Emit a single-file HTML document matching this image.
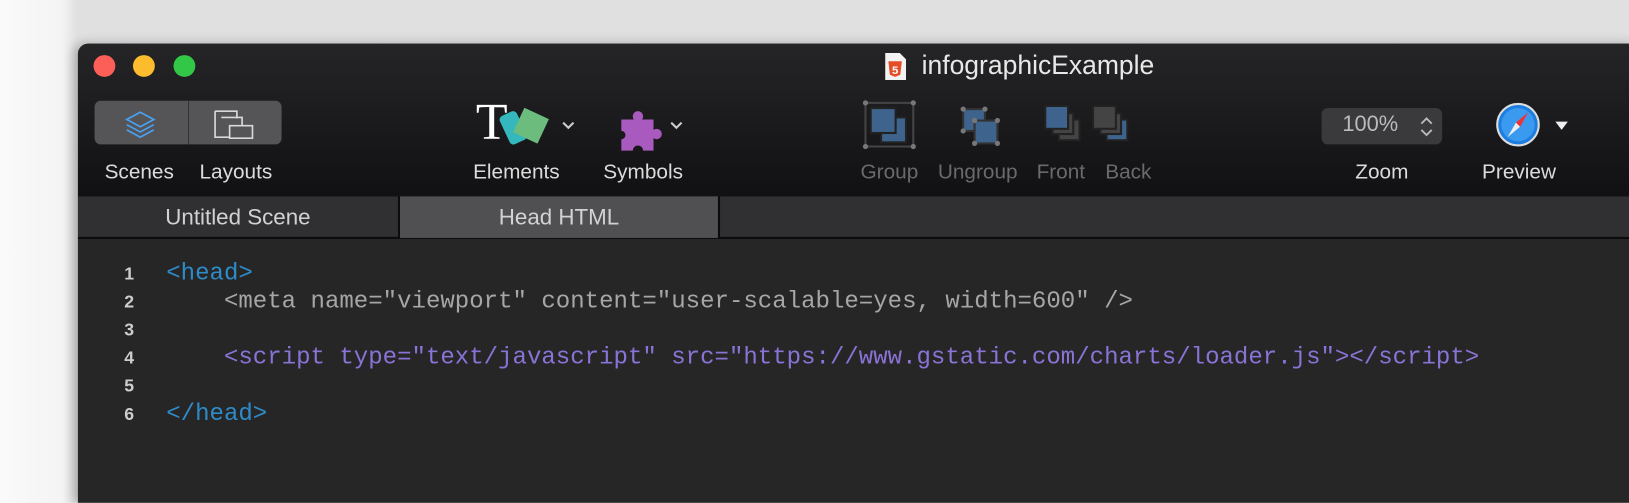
<!DOCTYPE html>
<html style="overflow:hidden;width:1629px;height:503px;background:#262626"><head><meta charset="utf-8"><style>
*{margin:0;padding:0;box-sizing:border-box}
body{width:1629px;height:503px;overflow:hidden;background:#f2f2f2;position:relative;font-family:"Liberation Sans",sans-serif}
.wrap{position:absolute;left:0;top:0;width:1568px;height:484px;overflow:hidden;transform:scale(1.039);transform-origin:0 0;background:linear-gradient(90deg,#fafafa,#f4f4f4 60px,#e0e0e0 74px)}
.win{position:absolute;left:75px;top:42px;width:1500px;height:442px;border-radius:10px 0 0 0;overflow:hidden;background:#262626;box-shadow:-4px 0 10px rgba(0,0,0,.25)}
.tb{position:absolute;left:0;top:0;width:100%;height:146px;background:linear-gradient(#252527,#111113)}
.dot{position:absolute;top:11px;width:21px;height:21px;border-radius:50%}
.title{position:absolute;left:812px;top:7px;color:#e8e8e8;font-size:25.5px}
.lbl{position:absolute;top:113px;font-size:20px;color:#dcdcdc;transform:translateX(-50%);white-space:nowrap}
.dim{color:#6a6a6a}
.tabs{position:absolute;top:146px;left:0;width:100%;height:42px;background:#303033;border-top:1px solid #0c0c0c;border-bottom:2px solid #0c0c0c}
.tab{position:absolute;top:0;height:40px;line-height:40px;text-align:center;color:#d2d2d2;font-size:21.5px}
.code{position:absolute;left:0;top:208px;font-family:"Liberation Mono",monospace;font-size:23.15px;line-height:27px;white-space:pre}
.ln{position:absolute;left:0;width:54px;text-align:right;color:#cdcdcd;font-family:"Liberation Sans",sans-serif;font-size:17px;font-weight:bold}
.c{position:absolute;left:85px}
.b{color:#2e8bc9}.g{color:#a6a6a6}.p{color:#8a73d6}
</style></head><body>
<div class="wrap">
<div class="win">
<div class="tb">
<div class="dot" style="left:15px;background:#fc5f57"></div>
<div class="dot" style="left:53px;background:#fdbc2e"></div>
<div class="dot" style="left:92px;background:#33c748"></div>
<svg style="position:absolute;left:776px;top:8px" width="22" height="28"><path d="M1 1h14l6 6v20H1z" fill="#f2f2f2"/><path d="M4 9h13l-1.5 13-5 2-5-2z" fill="#e44d26"/><text x="7.5" y="21" font-size="11" fill="#fff" font-family="Liberation Sans" font-weight="bold">5</text></svg>
<div class="title">infographicExample</div>
<div style="position:absolute;left:16px;top:55px;width:180px;height:42px;border-radius:6px;background:#555558"></div>
<div style="position:absolute;left:106px;top:55px;width:1px;height:42px;background:#333"></div>
<svg style="position:absolute;left:40px;top:62px" width="40" height="30" fill="none" stroke="#4aa0f0" stroke-width="1.6"><path d="M20 4l13 7-13 7-13-7z"/><path d="M7 16l13 7 13-7"/><path d="M7 21l13 7 13-7"/></svg>
<svg style="position:absolute;left:130px;top:63px" width="42" height="30" fill="none" stroke="#d8d8d8" stroke-width="1.6"><path d="M2 2h21v7M2 2v25h14"/><path d="M8 8h20v8"/><path d="M16 16h22v12H16z"/></svg>
<div class="lbl" style="left:59px">Scenes</div>
<div class="lbl" style="left:152px">Layouts</div>
<div style="position:absolute;left:383px;top:50px;font-family:'Liberation Serif',serif;font-size:50px;color:#fff;line-height:50px">T</div>
<svg style="position:absolute;left:400px;top:60px" width="70" height="45"><rect x="10" y="6" width="18" height="30" rx="4" fill="#34b7bd" transform="rotate(-25 19 21)"/><rect x="23" y="6" width="26" height="26" fill="#6cbc7d" transform="rotate(25 36 19)"/></svg>
<svg style="position:absolute;left:465px;top:74px" width="14" height="10" fill="none" stroke="#ccc" stroke-width="2"><path d="M2 2l5 5 5-5"/></svg>
<svg style="position:absolute;left:521px;top:61px" width="44" height="46"><path d="M2 12h12a5 5 0 1 1 8 0h11v10a5 5 0 1 1 0 8v12h-10a5 5 0 1 0-10 0H2V31a4 4 0 1 0 0-8z" fill="#a85abf"/></svg>
<svg style="position:absolute;left:569px;top:74px" width="14" height="10" fill="none" stroke="#ccc" stroke-width="2"><path d="M2 2l5 5 5-5"/></svg>
<div class="lbl" style="left:422px">Elements</div>
<div class="lbl" style="left:544px">Symbols</div>
<svg style="position:absolute;left:755px;top:53px" width="300" height="50">
<rect x="3" y="4" width="46" height="42" fill="none" stroke="#444" stroke-width="2"/>
<g fill="#777"><circle cx="3" cy="4" r="2.5"/><circle cx="49" cy="4" r="2.5"/><circle cx="3" cy="46" r="2.5"/><circle cx="49" cy="46" r="2.5"/></g>
<rect x="18" y="18" width="24" height="24" fill="#3e638c" stroke="#222" stroke-width="2"/><rect x="8" y="9" width="24" height="24" fill="#3e638c" stroke="#222" stroke-width="2"/>
<path d="M97 10h21v21H97z" fill="#3e638c" stroke="#333" stroke-width="2"/><path d="M108 21h22v22h-22z" fill="#3e638c" stroke="#333" stroke-width="2"/>
<g fill="#777"><circle cx="97" cy="10" r="2.5"/><circle cx="118" cy="10" r="2.5"/><circle cx="97" cy="31" r="2.5"/><circle cx="108" cy="21" r="2.5"/><circle cx="130" cy="21" r="2.5"/><circle cx="108" cy="43" r="2.5"/><circle cx="130" cy="43" r="2.5"/></g>
<rect x="189" y="20" width="20" height="20" fill="#444" stroke="#222" stroke-width="2"/><rect x="183" y="14" width="20" height="20" fill="#444" stroke="#222" stroke-width="2"/><rect x="176" y="7" width="22" height="22" fill="#3e638c" stroke="#222" stroke-width="2"/>
<rect x="235" y="20" width="20" height="20" fill="#3e638c" stroke="#222" stroke-width="2"/><rect x="229" y="14" width="20" height="20" fill="#444" stroke="#222" stroke-width="2"/><rect x="222" y="7" width="22" height="22" fill="#444" stroke="#222" stroke-width="2"/>
</svg>
<div class="lbl dim" style="left:781px">Group</div>
<div class="lbl dim" style="left:866px">Ungroup</div>
<div class="lbl dim" style="left:946px">Front</div>
<div class="lbl dim" style="left:1011px">Back</div>
<div style="position:absolute;left:1197px;top:62px;width:116px;height:35px;border-radius:6px;background:#3a3a3c"></div>
<div style="position:absolute;left:1217px;top:66px;color:#bbb;font-size:21px">100%</div>
<svg style="position:absolute;left:1290px;top:68px" width="16" height="24" fill="none" stroke="#bbb" stroke-width="1.8"><path d="M3 9l5-5 5 5M3 15l5 5 5-5"/></svg>
<div class="lbl" style="left:1255px">Zoom</div>
<svg style="position:absolute;left:1364px;top:56px" width="44" height="44"><circle cx="22" cy="22" r="20" fill="#1e7ee0" stroke="#ddd" stroke-width="2"/><circle cx="22" cy="22" r="16" fill="#3a9af0"/><path d="M32 10L20 20l4 4z" fill="#e33"/><path d="M12 34l8-14 4 4z" fill="#eee"/></svg>
<svg style="position:absolute;left:1421px;top:74px" width="14" height="10"><path d="M1 1h12L7 9z" fill="#eee"/></svg>
<div class="lbl" style="left:1387px">Preview</div>
</div>
<div class="tabs">
<div class="tab" style="left:0;width:308px">Untitled Scene</div>
<div style="position:absolute;left:308px;top:0;width:2px;height:40px;background:#0c0c0c"></div>
<div class="tab" style="left:310px;width:306px;background:#505053">Head HTML</div>
<div style="position:absolute;left:616px;top:0;width:2px;height:40px;background:#0c0c0c"></div>
</div>
<div class="code">
<div class="ln" style="top:0">1</div><div class="c b" style="top:0">&lt;head&gt;</div>
<div class="ln" style="top:27px">2</div><div class="c g" style="top:27px">    &lt;meta name="viewport" content="user-scalable=yes, width=600" /&gt;</div>
<div class="ln" style="top:54px">3</div>
<div class="ln" style="top:81px">4</div><div class="c p" style="top:81px">    &lt;script type="text/javascript" src="https://www.gstatic.com/charts/loader.js"&gt;&lt;/script&gt;</div>
<div class="ln" style="top:108px">5</div>
<div class="ln" style="top:135px">6</div><div class="c b" style="top:135px">&lt;/head&gt;</div>
</div>
</div>
</div>
</body></html>
